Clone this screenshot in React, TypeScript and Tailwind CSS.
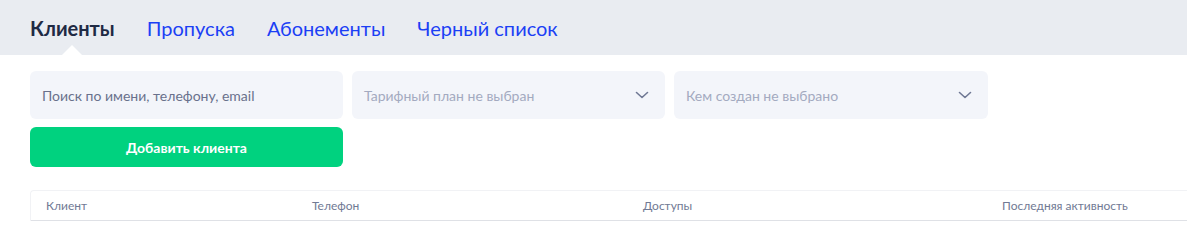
import React from "react";

const Chevron = () => (
  <svg width="14" height="8" viewBox="0 0 14 8" fill="none">
    <path d="M1.5 1.5 L7 6.5 L12.5 1.5" stroke="#6f7894" strokeWidth="1.6" strokeLinecap="round" strokeLinejoin="round" />
  </svg>
);

export default function App() {
  return (
    <div className="w-[1187px] h-[232px] bg-white overflow-hidden" style={{ fontFamily: "Lato, 'Noto Sans', sans-serif" }}>
      <div className="h-[55px] bg-[#e9ecf1] flex items-center pl-[30px] gap-[32px] text-[20px]">
        <div className="relative h-full flex items-center">
          <span className="font-bold text-[#1f2a44]">Клиенты</span>
          <div className="absolute bottom-0 left-1/2 -translate-x-1/2 w-0 h-0 border-l-[10px] border-r-[10px] border-b-[10px] border-l-transparent border-r-transparent border-b-white" />
        </div>
        <span className="text-[#1b3ff5]">Пропуска</span>
        <span className="text-[#1b3ff5]">Абонементы</span>
        <span className="text-[#1b3ff5]">Черный список</span>
      </div>
      <div className="pl-[30px] pt-[16px] flex flex-col gap-[8px]">
        <div className="flex gap-[9px]">
          <div className="w-[313px] h-[48px] rounded-[6px] bg-[#f3f5fa] flex items-center px-[12px] text-[14px] text-[#69718c]">
            Поиск по имени, телефону, email
          </div>
          <div className="w-[313px] h-[48px] rounded-[6px] bg-[#f3f5fa] flex items-center justify-between pl-[12px] pr-[16px] text-[14px] text-[#a3aac0]">
            <span>Тарифный план не выбран</span>
            <Chevron />
          </div>
          <div className="w-[314px] h-[48px] rounded-[6px] bg-[#f3f5fa] flex items-center justify-between pl-[12px] pr-[16px] text-[14px] text-[#a3aac0]">
            <span>Кем создан не выбрано</span>
            <Chevron />
          </div>
        </div>
        <div className="w-[313px] h-[40px] rounded-[6px] bg-[#00d27f] flex items-center justify-center text-white font-bold text-[14px]">
          Добавить клиента
        </div>
      </div>
      <div className="ml-[30px] mt-[23px] border-t border-l border-[#f1f2f5] rounded-tl-[4px]">
        <div className="h-[30px] flex items-center text-[12px] text-[#717a94] border-b border-[#dfe1e6] relative">
          <span className="absolute left-[15px]">Клиент</span>
          <span className="absolute left-[281px]">Телефон</span>
          <span className="absolute left-[612px]">Доступы</span>
          <span className="absolute left-[971px]">Последняя активность</span>
        </div>
      </div>
    </div>
  );
}
